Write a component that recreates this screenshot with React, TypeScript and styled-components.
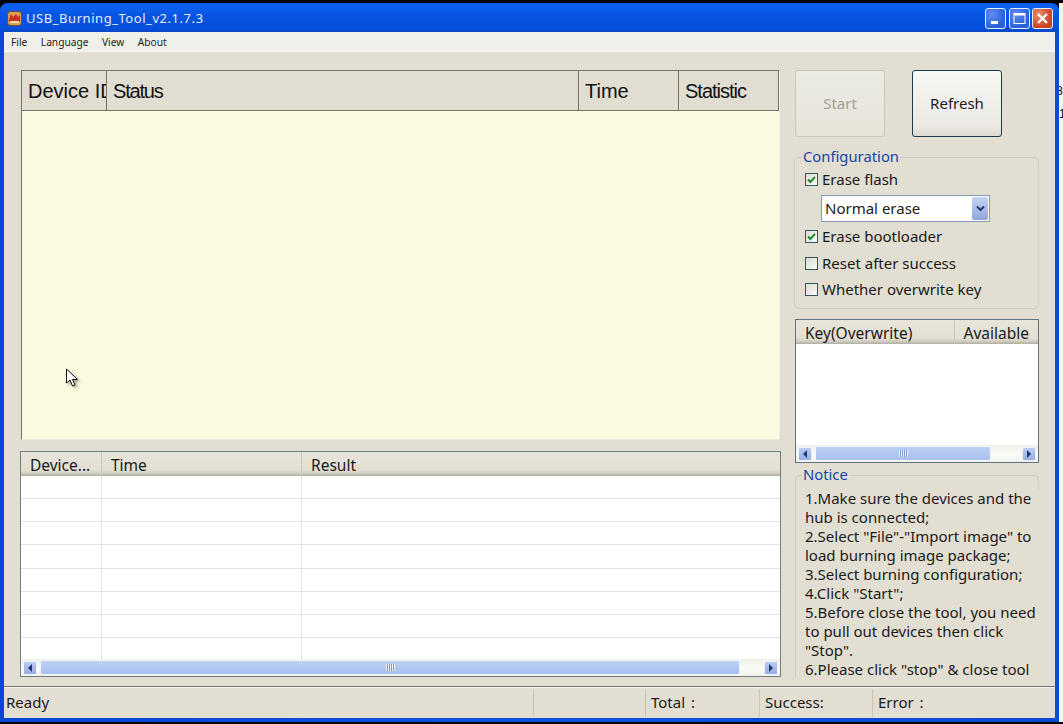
import { createGlobalStyle, styled } from 'styled-components';

const GlobalStyle = createGlobalStyle`
    html, body {
        margin: 0;
        padding: 0;
        background: #000;
    }
    * {
        box-sizing: border-box;
    }
`;

const uiFont = `"Noto Sans", "Open Sans", "DejaVu Sans", sans-serif`;
const headFont = `"Liberation Sans", Arial, sans-serif`;

const Screen = styled.div`
    position: relative;
    display: flex;
    width: 1063px;
    height: 724px;
    padding-top: 3px;
    overflow: hidden;
    background: #000;
    font-family: ${uiFont};
    color: #1a1a1a;
`;

const Window = styled.div`
    display: flex;
    flex-direction: column;
    width: 1059px;
    height: 719px;
    padding: 0 4px 4px;
    border-radius: 8px 8px 0 0;
    background: linear-gradient(90deg, #0a45d8 0%, #0b50dd 50%, #0a4ad6 100%);
`;

const Outside = styled.div`
    width: 4px;
    height: 719px;
    background: #f4f4f4;
    color: #000;
    font: 12px/23px ${headFont};
    overflow: hidden;
    padding-top: 77px;
    text-indent: -3px;
`;

const TitleBar = styled.div`
    display: flex;
    align-items: center;
    flex: 0 0 29px;
    margin: 0 -4px;
    padding: 1px 6px 0 7px;
    border-radius: 8px 8px 0 0;
    background: linear-gradient(180deg, #0a58e6 0%, #0c62f0 12%, #0655e2 40%, #0550dc 85%, #0748c8 100%);
`;

const TitleText = styled.span`
    margin-left: 4px;
    flex: 1;
    font-size: 13px;
    letter-spacing: 0.55px;
    color: #e4ecfa;
`;

const CaptionButton = styled.div<{ $close?: boolean }>`
    display: flex;
    align-items: center;
    justify-content: center;
    width: 21px;
    height: 21px;
    margin-left: 2.5px;
    border: 1px solid #e8eefc;
    border-radius: 3px;
    background: ${(p) =>
        p.$close
            ? 'radial-gradient(circle at 30% 30%, #e8916e, #c8431d 70%)'
            : 'radial-gradient(circle at 30% 30%, #5d8df0, #2a5fdc 70%)'};
`;

const Client = styled.div`
    display: flex;
    flex-direction: column;
    flex: 1;
    min-height: 0;
    background: #e2ded1;
`;

const MenuBar = styled.div`
    display: flex;
    flex: 0 0 20px;
    align-items: center;
    gap: 13.5px;
    padding: 0 0 0 7px;
    background: #f0f0ea;
    border-bottom: 1px solid #fbfbf7;
    font-size: 10.2px;
    color: #222;
`;

const Main = styled.div`
    display: flex;
    flex: 1;
    min-height: 0;
    padding: 18px 0 0 16px;
    gap: 14px;
`;

const LeftColumn = styled.div`
    display: flex;
    flex-direction: column;
    width: 761px;
    gap: 11px;
`;

const RightColumn = styled.div`
    display: flex;
    flex-direction: column;
    width: 244px;
`;

const DeviceList = styled.div`
    display: flex;
    flex-direction: column;
    height: 371px;
    margin-left: 1px;
    margin-right: 1px;
    border: 1px solid #76736a;
    border-right-color: #efece2;
    border-bottom-color: #efece2;
    background: #fdfbdf;
`;

const DeviceHead = styled.div`
    display: grid;
    grid-template-columns: 85px 472px 100px 1fr;
    flex: 0 0 40px;
    background: #e1ddd1;
    border-bottom: 1px solid #77746a;
    font: 20px ${headFont};
    color: #111;
`;

const DeviceCell = styled.div<{ $squeeze?: number }>`
    display: flex;
    align-items: center;
    padding: 2px 3px 0 6px;
    border-right: 1px solid #77746a;
    overflow: hidden;
    white-space: nowrap;
    letter-spacing: ${(p) => p.$squeeze ?? 0}px;
`;

const ResultList = styled.div`
    display: flex;
    flex-direction: column;
    height: 226px;
    border: 1px solid #6f7f84;
    background: #fff;
`;

const ReportHead = styled.div<{ $columns: string; $height: number }>`
    display: grid;
    grid-template-columns: ${(p) => p.$columns};
    flex: 0 0 ${(p) => p.$height}px;
    background: linear-gradient(180deg, #e8e4da 0%, #e3dfd2 75%, #d2cfc2 88%, #b0aea5 100%);
    font-size: 15.5px;
`;

const ReportCell = styled.div<{ $right?: boolean }>`
    display: flex;
    align-items: center;
    padding-left: 9px;
    padding-top: 2px;
    white-space: nowrap;
    overflow: hidden;
    &:not(:last-child) {
        box-shadow: inset -1px 0 0 #cbc7b8;
    }
    ${(p) => p.$right && 'justify-content: flex-end; padding-right: 9px;'}
`;

const ResultRows = styled.div`
    flex: 1;
    min-height: 0;
    overflow: hidden;
`;

const ResultRow = styled.div`
    display: grid;
    grid-template-columns: 81px 200px 1fr;
    height: 23.17px;
    border-bottom: 1px solid #e3e3e0;
`;

const ResultCell = styled.div`
    &:not(:last-child) {
        border-right: 1px solid #e3e3e0;
    }
`;

const ScrollBar = styled.div`
    display: flex;
    align-items: center;
    flex: 0 0 17px;
    padding: 1px 2px;
    background: linear-gradient(180deg, #f0f0ea 0%, #fbfbf8 60%, #f1f1ec 100%);
`;

const ScrollArrow = styled.div`
    display: flex;
    align-items: center;
    justify-content: center;
    flex: 0 0 14px;
    height: 14px;
    border: 1px solid #eef2fc;
    border-radius: 2px;
    background: linear-gradient(180deg, #bccdf2, #98aee2);
`;

const ScrollThumb = styled.div`
    display: flex;
    align-items: center;
    justify-content: center;
    margin-left: 3px;
    height: 15px;
    border: 1px solid #f4f7fd;
    border-radius: 2px;
    background: linear-gradient(180deg, #bdd0f4, #a8c0ee);
`;

const Grip = styled.div`
    width: 9px;
    height: 7px;
    background: repeating-linear-gradient(90deg, #eef3fc 0 1px, #7f99cf 1px 2px);
`;

const ScrollSpace = styled.div`
    flex: 1;
`;

const ButtonRow = styled.div`
    display: flex;
    gap: 27px;
    margin-bottom: 10px;
`;

const PushButton = styled.button<{ $disabled?: boolean }>`
    width: 90px;
    height: 67px;
    padding: 0 0 2px;
    border: 1px solid ${(p) => (p.$disabled ? '#c9c5b8' : '#1f3a4e')};
    border-radius: 3px;
    background: ${(p) =>
        p.$disabled ? 'linear-gradient(180deg, #ecebe4, #e6e3d9)' : 'linear-gradient(180deg, #f6f6f2, #eceae3 85%, #dcd9cf)'};
    color: ${(p) => (p.$disabled ? '#a3a094' : '#1a1a1a')};
    font: 15px ${uiFont};
`;

const GroupBox = styled.fieldset`
    margin: 0;
    min-width: 0;
    border: 1px solid #cfcbbb;
    border-radius: 5px;
`;

const ConfigGroup = styled(GroupBox)`
    height: 162px;
    margin-left: -1px;
    padding: 0 0 0 10px;
    margin-bottom: 10px;
`;

const GroupTitle = styled.legend`
    padding: 0 1px 2px;
    margin-left: -3px;
    font-size: 14.8px;
    line-height: 18px;
    color: #1546a8;
`;

const CheckRow = styled.label<{ $gap: number }>`
    display: flex;
    align-items: center;
    height: 20px;
    margin-top: ${(p) => p.$gap}px;
    padding-bottom: 2px;
    font-size: 15px;
    white-space: nowrap;
`;

const CheckBox = styled.span`
    display: flex;
    align-items: center;
    justify-content: center;
    width: 13px;
    height: 13px;
    margin-right: 4px;
    border: 1px solid #2e5a60;
    background: linear-gradient(135deg, #dcdcd4, #fbfbf8);
`;

const Combo = styled.div`
    display: flex;
    align-items: center;
    justify-content: space-between;
    width: 169px;
    height: 27px;
    margin: 5px 0 5px 16px;
    padding: 0 1px 0 3px;
    border: 1px solid #7f9db9;
    background: #fff;
    font-size: 15px;
`;

const ComboLabel = styled.span`
    padding-bottom: 2px;
`;

const ComboArrow = styled.span`
    display: flex;
    align-items: center;
    justify-content: center;
    width: 16px;
    height: 23px;
    border-radius: 2px;
    background: linear-gradient(180deg, #c6d3f0, #8ea6dc);
`;

const KeyList = styled.div`
    display: flex;
    flex-direction: column;
    height: 144px;
    border: 1px solid #5f7480;
    background: #fff;
`;

const KeyBody = styled.div`
    flex: 1;
`;

const NoticeGroup = styled(GroupBox)`
    flex: 1;
    min-height: 0;
    margin-top: 2px;
    padding: 0 0 0 9px;
    border-bottom: none;
    border-radius: 5px 5px 0 0;
`;

const NoticeText = styled.div`
    height: 188px;
    margin: 4px -1px 0 0;
    overflow: hidden;
    background: #e2ded1;
    font-size: 15px;
    line-height: 19px;
    white-space: nowrap;
`;

const StatusBar = styled.div`
    display: flex;
    flex: 0 0 32px;
    margin-top: 9px;
    background: #e2ded1;
    border-top: 1px solid #77746a;
    box-shadow: inset 0 1px 0 #f4f2ea;
    font-size: 15px;
    word-spacing: 2px;
`;

const StatusCell = styled.div<{ $width?: number }>`
    display: flex;
    align-items: center;
    ${(p) => (p.$width ? `flex: 0 0 ${p.$width}px;` : 'flex: 1;')}
    padding: 0 0 2px 2px;
    margin: 2px 0 1px;
    white-space: pre;
    &:not(:first-child) {
        padding-left: 5px;
        border-left: 1px solid #c9c5b6;
    }
`;

const Pointer = styled.svg`
    position: absolute;
    left: 65px;
    top: 368px;
    filter: drop-shadow(2px 2px 1.5px rgba(0, 0, 0, 0.35));
`;

const ScrollLeftIcon = () => (
    <svg width="6" height="8" viewBox="0 0 6 8">
        <path d="M5 0 L1 4 L5 8 Z" fill="#1d3a78" />
    </svg>
);

const ScrollRightIcon = () => (
    <svg width="6" height="8" viewBox="0 0 6 8">
        <path d="M1 0 L5 4 L1 8 Z" fill="#1d3a78" />
    </svg>
);

const Tick = () => (
    <svg width="9" height="9" viewBox="0 0 9 9">
        <path d="M1 4.5 L3.4 7 L8 1.8" fill="none" stroke="#1f8a2c" strokeWidth="1.9" />
    </svg>
);

const HScroll = ({ thumb }: { thumb: number }) => (
    <ScrollBar>
        <ScrollArrow>
            <ScrollLeftIcon />
        </ScrollArrow>
        <ScrollThumb style={{ width: thumb }}>
            <Grip />
        </ScrollThumb>
        <ScrollSpace />
        <ScrollArrow>
            <ScrollRightIcon />
        </ScrollArrow>
    </ScrollBar>
);

const noticeLines = [
    '1.Make sure the devices and the',
    'hub is connected;',
    '2.Select "File"-"Import image" to',
    'load burning image package;',
    '3.Select burning configuration;',
    '4.Click "Start";',
    '5.Before close the tool, you need',
    'to pull out devices then click',
    '"Stop".',
    '6.Please click "stop" & close tool',
];

const App = () => {
    return (
        <>
            <GlobalStyle />
            <Screen>
                <Window>
                    <TitleBar>
                        <svg width="15" height="15" viewBox="0 0 15 15">
                            <rect x="0.5" y="0.5" width="14" height="14" rx="3" fill="#d9a05a" stroke="#7a4a26" />
                            <path d="M2 8 L4 3 L6 6 L9 3 L11 6 L13 4 L13 11 L2 11 Z" fill="#c8321c" />
                            <rect x="3" y="10" width="9" height="2" fill="#f2dca8" />
                        </svg>
                        <TitleText>USB_Burning_Tool_v2.1.7.3</TitleText>
                        <CaptionButton>
                            <svg width="13" height="13" viewBox="0 0 13 13">
                                <rect x="2" y="9" width="7" height="3" fill="#fff" />
                            </svg>
                        </CaptionButton>
                        <CaptionButton>
                            <svg width="13" height="13" viewBox="0 0 13 13">
                                <rect x="1" y="1.5" width="11" height="10" fill="none" stroke="#fff" />
                                <rect x="1" y="1" width="11" height="2.5" fill="#fff" />
                            </svg>
                        </CaptionButton>
                        <CaptionButton $close>
                            <svg width="13" height="13" viewBox="0 0 13 13">
                                <path d="M2 2 L11 11 M11 2 L2 11" stroke="#fff" strokeWidth="2.2" />
                            </svg>
                        </CaptionButton>
                    </TitleBar>
                    <Client>
                        <MenuBar>
                            <span>File</span>
                            <span>Language</span>
                            <span>View</span>
                            <span>About</span>
                        </MenuBar>
                        <Main>
                            <LeftColumn>
                                <DeviceList>
                                    <DeviceHead>
                                        <DeviceCell>Device ID</DeviceCell>
                                        <DeviceCell $squeeze={-1.2}>Status</DeviceCell>
                                        <DeviceCell>Time</DeviceCell>
                                        <DeviceCell $squeeze={-1}>Statistic</DeviceCell>
                                    </DeviceHead>
                                </DeviceList>
                                <ResultList>
                                    <ReportHead $columns="81px 200px 1fr" $height={23}>
                                        <ReportCell>Device...</ReportCell>
                                        <ReportCell>Time</ReportCell>
                                        <ReportCell>Result</ReportCell>
                                    </ReportHead>
                                    <ResultRows>
                                        {Array.from({ length: 8 }, (_, i) => (
                                            <ResultRow key={i}>
                                                <ResultCell />
                                                <ResultCell />
                                                <ResultCell />
                                            </ResultRow>
                                        ))}
                                    </ResultRows>
                                    <HScroll thumb={700} />
                                </ResultList>
                            </LeftColumn>
                            <RightColumn>
                                <ButtonRow>
                                    <PushButton $disabled>Start</PushButton>
                                    <PushButton>Refresh</PushButton>
                                </ButtonRow>
                                <ConfigGroup>
                                    <GroupTitle>Configuration</GroupTitle>
                                    <CheckRow $gap={3}>
                                        <CheckBox>
                                            <Tick />
                                        </CheckBox>
                                        Erase flash
                                    </CheckRow>
                                    <Combo>
                                        <ComboLabel>Normal erase</ComboLabel>
                                        <ComboArrow>
                                            <svg width="9" height="7" viewBox="0 0 9 7">
                                                <path d="M1 1.5 L4.5 5 L8 1.5" fill="none" stroke="#1d3a78" strokeWidth="2" />
                                            </svg>
                                        </ComboArrow>
                                    </Combo>
                                    <CheckRow $gap={0}>
                                        <CheckBox>
                                            <Tick />
                                        </CheckBox>
                                        Erase bootloader
                                    </CheckRow>
                                    <CheckRow $gap={7}>
                                        <CheckBox />
                                        Reset after success
                                    </CheckRow>
                                    <CheckRow $gap={6}>
                                        <CheckBox />
                                        Whether overwrite key
                                    </CheckRow>
                                </ConfigGroup>
                                <KeyList>
                                    <ReportHead $columns="159px 1fr" $height={22}>
                                        <ReportCell>Key(Overwrite)</ReportCell>
                                        <ReportCell $right>Available</ReportCell>
                                    </ReportHead>
                                    <KeyBody />
                                    <HScroll thumb={176} />
                                </KeyList>
                                <NoticeGroup>
                                    <GroupTitle>Notice</GroupTitle>
                                    <NoticeText>
                                        {noticeLines.map((line) => (
                                            <div key={line}>{line}</div>
                                        ))}
                                    </NoticeText>
                                </NoticeGroup>
                            </RightColumn>
                        </Main>
                        <StatusBar>
                            <StatusCell $width={529}>Ready</StatusCell>
                            <StatusCell $width={112} />
                            <StatusCell $width={114}>Total :</StatusCell>
                            <StatusCell $width={113}>Success:</StatusCell>
                            <StatusCell>Error :</StatusCell>
                        </StatusBar>
                    </Client>
                </Window>
                <Outside>
                    8
                    <br />1
                </Outside>
                <Pointer width="14" height="20" viewBox="0 0 14 20">
                    <path d="M1.5 1 L1.5 15 L5 12 L7.5 18 L10 17 L7.5 11.5 L12.5 11.5 Z" fill="#fff" stroke="#111" strokeWidth="1" />
                </Pointer>
            </Screen>
        </>
    );
};

export default App;
